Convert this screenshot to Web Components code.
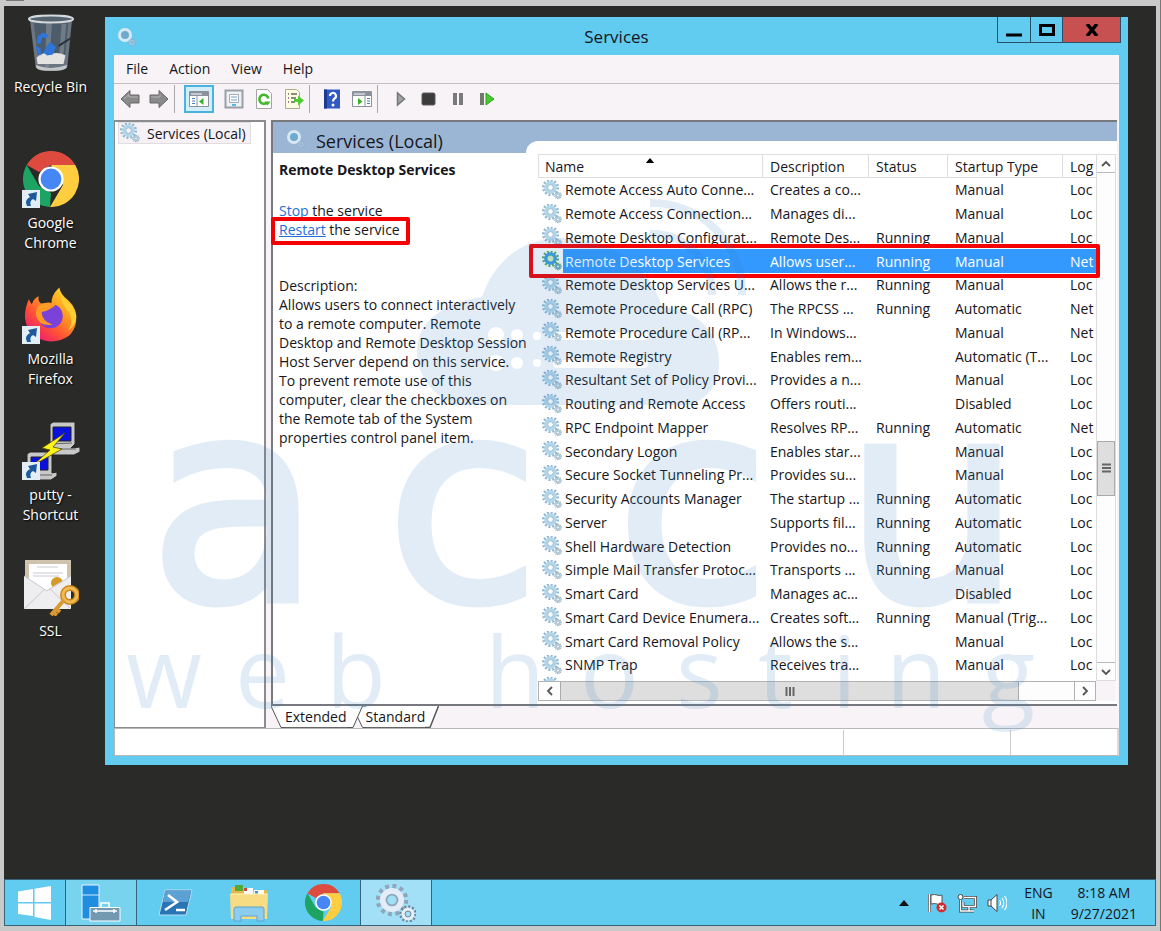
<!DOCTYPE html>
<html lang="en">
<head>
<meta charset="utf-8">
<title>Services</title>
<style>
    html, body { height: 100%; margin: 0; }
    body {
        font: 14px/19px "Open Sans", "Noto Sans", sans-serif;
        color: #16161c;
        background: #c9c9c9;
    }
</style>
</head>
<body>
<remote-screen>
    <desk-icon slot="icons" icon="bin">Recycle Bin</desk-icon>
    <desk-icon slot="icons" icon="chrome" shortcut>Google Chrome</desk-icon>
    <desk-icon slot="icons" icon="firefox" shortcut>Mozilla Firefox</desk-icon>
    <desk-icon slot="icons" icon="putty" shortcut>putty - Shortcut</desk-icon>
    <desk-icon slot="icons" icon="ssl">SSL</desk-icon>
    <app-window>
        <span slot="title">Services</span>
        <menu-bar></menu-bar>
        <tool-bar></tool-bar>
        <services-console></services-console>
        <status-bar></status-bar>
    </app-window>
    <task-bar slot="taskbar"></task-bar>
</remote-screen>

<script>
const gear = (cx, cy, r, color, light) => `
    <circle cx="${cx}" cy="${cy}" r="${r}" fill="none" stroke="${color}" stroke-width="${r * 0.5}" stroke-dasharray="${r * 0.27} ${r * 0.254}"/>
    <circle cx="${cx}" cy="${cy}" r="${r * 0.68}" fill="none" stroke="${light}" stroke-width="${r * 0.5}"/>
    <circle cx="${cx}" cy="${cy}" r="${r * 0.42}" fill="none" stroke="${color}" stroke-width="${r * 0.14}"/>`;

const ICONS = {
    gears: ['0 0 20 20', gear(8.5, 7.5, 6.8, '#8fb6cf', '#b4d6ea') + gear(16, 15.5, 3, '#86a6bb', '#b0cad9')],
    gearsOn: ['0 0 20 20', gear(8.5, 7.5, 6.8, '#58a850', '#3a9ee6') + '<circle cx="8.500" cy="7.500" r="2.800" fill="#d9efc0"/>' + gear(16, 15.5, 3, '#5c9c3c', '#58a8d8')],
    gearsPale: ['0 0 20 20', '<circle cx="9" cy="8" r="5.500" fill="#6fa9cf"/><circle cx="9" cy="8" r="5.500" fill="none" stroke="#d6e8f3" stroke-width="3"/>' + gear(16, 15.5, 3, '#8ba9c4', '#a9c6de')],
    gearsBig: ['0 0 40 38', gear(16, 16, 13, '#8fa5bb', '#e2edf8') + gear(32, 30, 7, '#6f8296', '#e6eef6')],
    back: ['0 0 20 20', '<path d="M1 10 10 1.500V6h9v8h-9v4.500z" fill="#8a8a8a" stroke="#666"/><path d="M4 10l5-4.500V8h9" stroke="#b4b4b4" fill="none"/>'],
    forward: ['0 0 20 20', '<path d="M19 10 10 1.500V6H1v8h9v4.500z" fill="#8a8a8a" stroke="#666"/><path d="M2 8h9V5.500" stroke="#b4b4b4" fill="none"/>'],
    tree: ['0 0 20 20', '<path d="M.5 2.500h19v15H.5z" fill="#fff" stroke="#8a929c"/><path d="M1 3h18v4H1z" fill="#8b929b"/><path d="M2 5h11" stroke="#fff"/><path d="M3 9.500h3M3 12h3M3 14.500h3" stroke="#4c7fc0"/><path d="M8 7v10" stroke="#8a929c"/><path d="M14.500 9v7L10 12.500z" fill="#35b324"/>'],
    props: ['0 0 20 20', '<path d="M1.500 1.500h17v17h-17z" fill="#eef2f5" stroke="#9aa0a6" stroke-width="2"/><path d="M5.500 5.500h9v8h-9z" fill="#fff" stroke="#a3adb6"/><path d="M7 8h6M7 11h6" stroke="#6d9fc4"/><path d="M8 16h4" stroke="#59b7e0" stroke-width="2"/>'],
    refresh: ['0 0 20 20', '<path d="M2.500.5h11l4 4v15h-15z" fill="#fff" stroke="#a6a6a6"/><path d="M13 13.500a4.500 4.500 0 1 1 1.300-4" fill="none" stroke="#43b82b" stroke-width="2.600"/><path d="M10.500 12.500h6l-3 4z" fill="#43b82b"/>'],
    export: ['0 0 20 20', '<path d="M1.500.5h11l3 3v16h-14z" fill="#fffbe2" stroke="#b0aa90"/><path d="M4 5h1M4 9h1M4 13h1M7 5h6M7 9h5M7 13h4" stroke="#666" stroke-width="1.400"/><path d="M10 10h4V6.500l6 5-6 5V13h-4z" fill="#51cc33"/>'],
    help: ['0 0 20 20', '<path d="M2 .5h16v19H2z" fill="#3159c4"/><path d="M2 .5h3v19H2z" fill="#1c3b8e"/><path d="M8 7a3 3 0 1 1 4.500 2.500Q11 10.500 11 12.500" stroke="#fff" stroke-width="2.200" fill="none"/><circle cx="11" cy="16" r="1.500" fill="#fff"/>'],
    pane: ['0 0 20 20', '<path d="M.5 2.500h19v15H.5z" fill="#fff" stroke="#8a929c"/><path d="M1 3h18v4H1z" fill="#8b929b"/><path d="M2 5h11" stroke="#fff"/><path d="M13 7v10" stroke="#8a929c"/><path d="M15 9.500h3M15 12h3M15 14.500h3" stroke="#4c7fc0"/><path d="M6 9v7l4.500-3.500z" fill="#35b324"/>'],
    play: ['0 0 20 20', '<path d="M7.500 4v12l7-6z" fill="#a0a4a8" stroke="#777" stroke-width="1.500"/>'],
    stop: ['0 0 20 20', '<rect x="3" y="4" width="13" height="12" rx="1.500" fill="#3c3c3c" stroke="#5c5c5c"/>'],
    pause: ['0 0 20 20', '<path d="M5 4h4v12H5zM11 4h4v12h-4z" fill="#7a7a7a"/>'],
    restart: ['0 0 20 20', '<path d="M3 4h4v12H3z" fill="#6d7a6c"/><path d="M9 4v12l8-6z" fill="#46cc30" stroke="#2f9e22"/>'],
    chrome: ['0 0 56 56', '<path d="M28 0a28 28 0 0 1 24.300 14H28L16 21 3.700 14A28 28 0 0 1 28 0z" fill="#dd4b3e"/><path d="M3.700 14 16 35l12 7-1 14A28 28 0 0 1 3.700 14z" fill="#1da362"/><path d="M28 14h24.300A28 28 0 0 1 27 56l13-22z" fill="#fecd40"/><circle cx="28" cy="28" r="12.600" fill="#fff"/><circle cx="28" cy="28" r="10.400" fill="#4686f5"/>'],
    firefox: ['0 0 56 56', '<defs><linearGradient id="ff" x1="1" y1="0" x2=".2" y2="1"><stop offset="0" stop-color="#ffee38"/><stop offset=".4" stop-color="#ffa01e"/><stop offset=".7" stop-color="#ff4f38"/><stop offset="1" stop-color="#e8147a"/></linearGradient></defs><path d="M6 12q1 3 3 5Q11 11 16 9q-1 5 2 7l11 2Q28 8 37 0q1 7 9 13 10 9 8 22-3 19-26 20Q5 53 2 31q0-11 4-19z" fill="url(#ff)"/><circle cx="28" cy="29" r="12.500" fill="#7a42d8"/><path d="M16 18q8-5 18-1-6 6-15 8 0 9 11 13-14 2-17-10 0-6 3-10z" fill="#ff9a24"/><path d="M38 3q0 14 9 22 5 10-1 19Q60 33 50 19 39 10 38 3z" fill="#ffcf33"/>'],
    putty: ['0 0 58 58', '<g stroke="#222"><path d="m28 2 3-2h22v22l-4 4 9-1v5l-6 3H31l-3-5z" fill="#c8c8c8"/><path d="M31 5h18v14H31z" fill="#0a11dd"/><path d="m28 22 22-1M30 27h24" stroke="#666"/><path d="m5 32 3-2h22v21l5-1v4l-6 4H8l-3-5z" fill="#c8c8c8"/><path d="M9 35h17v13H9z" fill="#0a11dd"/><path d="m8 53h22" stroke="#666"/></g><path d="M43 11 20 26l8 2-18 16 30-17-9-2z" fill="#fff21a" stroke="#514c00" stroke-width=".8"/>'],
    ssl: ['0 0 56 58', '<path d="M2 2h46v34H2z" fill="#cfc3ad"/><path d="M6 6h38v30H6z" fill="#fff"/><path d="M14 9h21M10 15h30M10 18h26" stroke="#c7cad6"/><circle cx="34" cy="25" r="6" fill="#d49a26"/><path d="M1 18l23 14 24-14v33H1z" fill="#eeeef0"/><path d="M1 51l21-20M48 51 27 31M1 18l23 15 24-15" fill="none" stroke="#c9c9cf"/><circle cx="47" cy="37" r="7" fill="none" stroke="#c98717" stroke-width="6"/><circle cx="47" cy="37" r="7" fill="none" stroke="#f0bb56" stroke-width="3"/><path d="M41 42 28 57M33 51l4 3M30 54l4 3" stroke="#d89a30" stroke-width="4"/>'],
    bin: ['0 0 50 60', '<path d="M3 5h44l-5 50q-2 4-17 4T9 55z" fill="#6c7680"/><path d="M7 9h36l-3 33H11z" fill="#4c5c6b"/><path d="M20 9h6l-3 46h-4zM36 10h5l-4 42h-4z" fill="#87919a" opacity=".6"/><path d="M10 45q7-6 15-4 10-2 15 2l-2 9H11z" fill="#e5e3e1"/><path d="M9 53q15 6 33 0l-1 3q-3 3-16 3T10 56z" fill="#c4c6c8"/><path d="m11 23 6-4 6 3-3 3-4-1-2 7-4-1zM9 33l5 2 1 8-4-2zM17 40l3-6 4-5 6 5-3 8-6 1z" fill="#2f74d8"/><path d="m47 24-14 9" stroke="#2c3138" stroke-width="2"/><ellipse cx="25" cy="5" rx="23" ry="3.600" fill="#55636f" stroke="#d5dade" stroke-width="2"/>'],
    windows: ['0 0 34 36', '<path d="M0 6.500 15 4v13H0zM16.500 3.700 33 1v16H16.500zM0 18.500h15V31L0 29zM16.500 18.500H33V35l-16.500-3z" fill="#fff"/>'],
    server: ['0 0 40 38', '<path d="M1 1h17v34H1z" fill="#1f8ee0" stroke="#e8f6ff"/><path d="M1 11h17" stroke="#cdeafc"/><path d="M9 23.500h30V37H9z" fill="#7398b2" stroke="#fff"/><path d="M20 23v-4h8v4M12 27h24M15 25v4M33 25v4" stroke="#fff" fill="none" stroke-width="1.500"/>'],
    shell: ['0 0 36 28', '<path d="M8 1h27l-6 25H2z" fill="#2874b4" stroke="#b9dcf1"/><path d="M8 2h26l-3 11H6z" fill="#5ba1d4"/><path d="m11 6 9 7-12 8M19 21h9" stroke="#fff" stroke-width="2.600" fill="none"/>'],
    folder: ['0 0 40 38', '<path d="M2 5q0-2 2-2h11l3 3h18q3 0 3 3v8H2z" fill="#e7b94b"/><path d="M6 1h8v6H6z" fill="#53a83c"/><path d="M15 4h9v7h-9zM25 6h10v6H25z" fill="#fff"/><path d="M15 4h3v3h-3z" fill="#d9452f"/><path d="M26 7h3v3h-3z" fill="#4a90d9"/><path d="M1 10h38l-1 25H2z" fill="#f7dc83"/><path d="M2 10h36" stroke="#fff3c2"/><path d="M5 37V25q0-2 2-2h26q2 0 2 2v12h-7v-5H12v5z" fill="#8ccdef" stroke="#5aa3cf"/>'],
    caret: ['0 0 10 6', '<path d="M0 6 5 0l5 6z" fill="#111"/>'],
    flag: ['0 0 20 20', '<path d="M2.500 1v18" stroke="#555" stroke-width="3"/><path d="M2.500 1v18" stroke="#fff" stroke-width="1.500"/><path d="M4 2q4-1 6 0t5 0v9q-3 1-5 0t-6 0z" fill="#fff" stroke="#555"/><circle cx="14.500" cy="14.500" r="5" fill="#d8282c"/><path d="m12.500 12.500 4 4m0-4-4 4" stroke="#fff" stroke-width="1.600"/>'],
    net: ['0 0 20 20', '<g fill="none"><path d="M7 4.500h11.500v9H6V9M12 14v4M7 18h10M3.500 7v11h4" stroke="#444" stroke-width="3"/><path d="M7 4.500h11.500v9H6V9M12 14v4M7 18h10M3.500 7v11h4" stroke="#fff" stroke-width="1.400"/></g><circle cx="3.500" cy="4" r="2.500" fill="#fff" stroke="#444"/>'],
    volume: ['0 0 20 20', '<path d="M1 7h3l6-5.500v17L4 13H1z" fill="#fff" stroke="#444"/><path d="M4 7v6" stroke="#444"/><path d="M12.500 7q2 3 0 6M15 5q3.500 5 0 10M17.500 3q5 7 0 14" stroke="#fff" fill="none" stroke-width="1.200"/>'],
    arrow: ['0 0 18 18', '<path d="M0 0h18v18H0z" fill="#e3edf5"/><path d="M5 16q-3-6 3-9L6 4l9-2-1 9-3-2q-4 2-2 7z" fill="#1d5a9c"/>'],
    up: ['0 0 12 12', '<path d="m2 8 4-4 4 4" fill="none" stroke="#555" stroke-width="1.800"/>'],
    down: ['0 0 12 12', '<path d="m2 4 4 4 4-4" fill="none" stroke="#555" stroke-width="1.800"/>'],
    left: ['0 0 12 12', '<path d="m8 2-4 4 4 4" fill="none" stroke="#555" stroke-width="1.800"/>'],
    right: ['0 0 12 12', '<path d="m4 2 4 4-4 4" fill="none" stroke="#555" stroke-width="1.800"/>'],
    gripV: ['0 0 12 12', '<path d="M2 2.500h9M2 6h9M2 9.500h9" stroke="#666" stroke-width="2"/>'],
    gripH: ['0 0 12 12', '<path d="M2.500 2v9M6 2v9M9.500 2v9" stroke="#666" stroke-width="2"/>']
};

function icon(name, w, h = w) {
    const [box, body] = ICONS[name];
    return `<svg width="${w}" height="${h}" viewBox="${box}" aria-hidden="true">${body}</svg>`;
}

const BASE = `
    :host, * { box-sizing: border-box; }
    svg { display: block; flex: none; }
    button { font: inherit; color: inherit; margin: 0; padding: 0; border: 0; background: none; }
`;

function define(name, html) {
    customElements.define(name, class extends HTMLElement {
        constructor() {
            super();
            this.attachShadow({ mode: 'open' });
            this.shadowRoot.innerHTML = `<style>${BASE}</style>` + (typeof html === 'function' ? html(this) : html);
        }
    });
}

define('remote-screen', `
    <style>
        :host { display: flex; flex-direction: column; min-height: 100vh; padding: 0 1px 5px 4px; border-right: 1px solid #777; }
        .edge { height: 6px; padding-left: 2px; }
        .edge i { display: block; width: 18px; height: 1px; background: #777; }
        .screen { flex: 1; display: flex; flex-direction: column; margin-right: 3px; background: #2a2b29; }
        .desktop { flex: 1; display: flex; padding: 11px 28px 114px 0; }
        .icons { width: 93px; flex: none; margin: -4px 8px 0 0; }
        .main { flex: 1; min-width: 0; display: flex; }
        ::slotted(app-window) { flex: 1; }
    </style>
    <div class="edge"><i></i></div>
    <div class="screen">
        <div class="desktop">
            <div class="icons"><slot name="icons"></slot></div>
            <div class="main"><slot></slot></div>
        </div>
        <slot name="taskbar"></slot>
    </div>
`);

define('desk-icon', el => {
    const sizes = { bin: [48, 60], chrome: [56, 56], firefox: [55, 56], putty: [58, 58], ssl: [56, 58] };
    const name = el.getAttribute('icon');
    return `
    <style>
        :host { display: block; height: 136px; color: #fff; text-align: center; line-height: 20px; text-shadow: 1px 1px 2px #000; }
        .pic { position: relative; display: flex; align-items: center; justify-content: center; height: 60px; margin-bottom: 4px; }
        .link { position: absolute; left: 18px; bottom: 1px; }
        .label { padding: 0 12px; }
        :host([icon="bin"]) .label { padding: 0; }
    </style>
    <div class="pic">${icon(name, ...sizes[name])}${el.hasAttribute('shortcut') ? `<span class="link">${icon('arrow', 18)}</span>` : ''}</div>
    <div class="label"><slot></slot></div>`;
});

define('app-window', `
    <style>
        :host { position: relative; display: flex; flex-direction: column; min-width: 0; padding: 0 9px 9px; background: #61cbf0; }
        header { display: grid; grid-template-columns: 1fr auto 1fr; height: 38px; flex: none; align-items: start; }
        header > svg { margin: 10px 0 0 2px; }
        .title { margin: 0; font-size: 17px; line-height: 40px; font-weight: 400; }
        .controls { justify-self: end; display: flex; margin-right: -2px; height: 26px; border: 1px solid #28506a; border-top: 0; }
        .controls button { display: grid; place-items: center; width: 33px; border-right: 1px solid #28506a; }
        .controls .max { width: 32px; }
        .controls .close { width: 57px; border: 0; background: #c75050; }
        .client { flex: 1; display: flex; flex-direction: column; min-height: 0; background: #f7f3f6; }
        ::slotted(services-console) { flex: 1; min-height: 0; }
        .stamp { position: absolute; inset: 0; width: 100%; height: 100%; pointer-events: none; }
    </style>
    <header>
        ${icon('gearsPale', 20)}
        <h1 class="title"><slot name="title"></slot></h1>
        <div class="controls">
            <button aria-label="Minimize"><svg width="16" height="14"><path d="M0 12h16" stroke="#000" stroke-width="3"/></svg></button>
            <button class="max" aria-label="Maximize"><svg width="16" height="12"><path d="M1.500 1.500h13v9h-13z" fill="none" stroke="#000" stroke-width="3"/></svg></button>
            <button class="close" aria-label="Close"><svg width="14" height="12"><path d="m2 0 10 12M12 0 2 12" stroke="#000" stroke-width="3.500"/></svg></button>
        </div>
    </header>
    <div class="client"><slot></slot></div>
    <svg class="stamp" viewBox="105 17 1023 748">
        <defs>
            <mask id="cut">
                <path d="M400 180h360v240H400z" fill="#fff"/>
                <g fill="#000">
                    <circle cx="496" cy="335" r="8"/><circle cx="517" cy="335" r="6"/><circle cx="537" cy="336" r="4"/>
                    <circle cx="496" cy="363" r="8"/><circle cx="517" cy="363" r="6"/><circle cx="537" cy="363" r="4"/>
                    <rect x="553" y="332" width="95" height="8" rx="4"/><rect x="553" y="360" width="95" height="8" rx="4"/>
                </g>
            </mask>
        </defs>
        <g fill="#3080c4" opacity=".14">
            <path mask="url(#cut)" d="M455 405C425 390 417 370 417 350c0-26 25-48 65-53 12-36 40-59 80-59 50 0 88 28 100 69 38 2 57 28 57 55 0 23-11 36-29 43z"/>
            <path d="M650 203a90 90 0 0 1 92 92M650 234a60 60 0 0 1 62 61" fill="none" stroke="#3080c4" stroke-width="8"/>
            <text y="600" x="149 386 616 844" font-family="DejaVu Sans" font-size="280" stroke="#3080c4" stroke-width="7">accu</text>
            <text y="708" x="126 235 326 420 485 580 676 758 832 886 982" font-family="Open Sans" font-size="98">web hosting</text>
        </g>
    </svg>
`);

define('menu-bar', `
    <style>
        :host { display: block; height: 29px; flex: none; border-bottom: 1px solid #c3c0c3; }
        nav { display: flex; gap: 21px; padding-left: 12px; line-height: 28px; }
    </style>
    <nav><button>File</button><button>Action</button><button>View</button><button>Help</button></nav>
`);

const tool = (name, label, cls = '') => `<button class="${cls}" aria-label="${label}">${icon(name, 20)}</button>`;

define('tool-bar', `
    <style>
        :host { display: flex; height: 36px; flex: none; padding: 1px 0; }
        .group { display: flex; align-items: center; gap: 10px; padding: 0 5px 0 12px; height: 28px; border-right: 1px solid #aaa; }
        .nav { gap: 9px; padding-left: 6px; }
        .view { padding-left: 9px; }
        .run { border: 0; gap: 9px; }
        .on { width: 30px; height: 28px; display: grid; place-items: center; background: #d3edf9; border: 2px solid #48b2e0; }
    </style>
    <div class="group nav">${tool('back', 'Back')}${tool('forward', 'Forward')}</div>
    <div class="group view">${tool('tree', 'Show console tree', 'on')}${tool('props', 'Properties')}${tool('refresh', 'Refresh')}${tool('export', 'Export list')}</div>
    <div class="group">${tool('help', 'Help')}${tool('pane', 'Show action pane')}</div>
    <div class="group run">${tool('play', 'Start service')}${tool('stop', 'Stop service')}${tool('pause', 'Pause service')}${tool('restart', 'Restart service')}</div>
`);

define('services-console', `
    <style>
        :host { display: flex; gap: 5px; }
        .tree { width: 152px; flex: none; padding: 0 3px; background: #fff; border: 1px solid #8b8b90; border-width: 2px 2px 1px 1px; }
        .node { display: inline-flex; align-items: center; gap: 7px; height: 22px; padding: 0 4px 0 1px; background: #f5f1f5; border: 1px solid #e0dce0; white-space: nowrap; }
        .right { flex: 1; min-width: 0; display: flex; flex-direction: column; }
        .pane { flex: 1; min-height: 0; display: grid; grid-template-columns: 253px 1fr; margin-right: 2px; background: #9bb5d5; border: 2px solid #77797e; border-right: 0; }
        .info { display: flex; flex-direction: column; min-height: 0; }
        .head { display: flex; align-items: center; gap: 11px; height: 31px; flex: none; padding: 8px 0 0 12px; font-size: 18px; }
        .head svg { margin-top: -6px; }
        .list { min-width: 0; min-height: 0; padding-top: 19px; display: flex; }
        service-list { flex: 1; min-width: 0; }
        service-detail { flex: 1; }
    </style>
    <div class="tree"><div class="node">${icon('gears', 20)}<span>Services (Local)</span></div></div>
    <div class="right">
        <div class="pane">
            <div class="info">
                <div class="head">${icon('gearsPale', 20)}<span>Services (Local)</span></div>
                <service-detail></service-detail>
            </div>
            <div class="list"><service-list></service-list></div>
        </div>
        <view-tabs></view-tabs>
    </div>
`);

define('service-detail', `
    <style>
        :host { display: block; padding: 7px 0 0 6px; background: #fff; }
        h2 { margin: 0 0 22px; font-size: 14px; line-height: 19px; }
        p { margin: 0; white-space: nowrap; }
        a { color: #1f6fd6; text-decoration: none; }
        a:hover, .boxed a { text-decoration: underline; }
        .boxed { position: relative; margin-bottom: 37px; }
        .boxed::after { content: ''; position: absolute; box-sizing: border-box; left: -8px; top: -3px; width: 139px; height: 28px; border: 4px solid #f40000; border-radius: 2px; }
    </style>
    <h2>Remote Desktop Services</h2>
    <p><a href="#stop">Stop</a> the service</p>
    <p class="boxed"><a href="#restart">Restart</a> the service</p>
    <p>Description:<br>Allows users to connect interactively<br>to a remote computer. Remote<br>Desktop and Remote Desktop Session<br>Host Server depend on this service.<br>To prevent remote use of this<br>computer, clear the checkboxes on<br>the Remote tab of the System<br>properties control panel item.</p>
`);

const services = [
    ['Remote Access Auto Conne...', 'Creates a co...', '', 'Manual', 'Loc'],
    ['Remote Access Connection...', 'Manages di...', '', 'Manual', 'Loc'],
    ['Remote Desktop Configurat...', 'Remote Des...', 'Running', 'Manual', 'Loc'],
    ['Remote Desktop Services', 'Allows user...', 'Running', 'Manual', 'Net'],
    ['Remote Desktop Services U...', 'Allows the r...', 'Running', 'Manual', 'Loc'],
    ['Remote Procedure Call (RPC)', 'The RPCSS ...', 'Running', 'Automatic', 'Net'],
    ['Remote Procedure Call (RP...', 'In Windows...', '', 'Manual', 'Net'],
    ['Remote Registry', 'Enables rem...', '', 'Automatic (T...', 'Loc'],
    ['Resultant Set of Policy Provi...', 'Provides a n...', '', 'Manual', 'Loc'],
    ['Routing and Remote Access', 'Offers routi...', '', 'Disabled', 'Loc'],
    ['RPC Endpoint Mapper', 'Resolves RP...', 'Running', 'Automatic', 'Net'],
    ['Secondary Logon', 'Enables star...', '', 'Manual', 'Loc'],
    ['Secure Socket Tunneling Pr...', 'Provides su...', '', 'Manual', 'Loc'],
    ['Security Accounts Manager', 'The startup ...', 'Running', 'Automatic', 'Loc'],
    ['Server', 'Supports fil...', 'Running', 'Automatic', 'Loc'],
    ['Shell Hardware Detection', 'Provides no...', 'Running', 'Automatic', 'Loc'],
    ['Simple Mail Transfer Protoc...', 'Transports ...', 'Running', 'Manual', 'Loc'],
    ['Smart Card', 'Manages ac...', '', 'Disabled', 'Loc'],
    ['Smart Card Device Enumera...', 'Creates soft...', 'Running', 'Manual (Trig...', 'Loc'],
    ['Smart Card Removal Policy', 'Allows the s...', '', 'Manual', 'Loc'],
    ['SNMP Trap', 'Receives tra...', '', 'Manual', 'Loc'],
    ['', '', '', '', '']
];

define('service-list', `
    <style>
        :host { position: relative; display: grid; grid-template: minmax(0, 1fr) 20px 3px / minmax(0, 1fr) 20px; padding: 13px 1px 0 12px; background: #fff; border-top-left-radius: 12px; }
        .view { overflow: hidden; }
        /* one row hangs below the visible part */
        table { width: 100%; height: 103%; table-layout: fixed; border-collapse: separate; border-spacing: 0; }
        th, td { padding: 0 0 0 7px; text-align: left; font-weight: 400; white-space: nowrap; overflow: hidden; line-height: 19px; }
        th { height: 24px; border: 1px solid #dedede; border-left: 0; }
        th:first-child { border-left: 1px solid #dedede; padding-left: 6px; }
        th:last-child { border-right: 0; }
        .name { position: relative; }
        .sort { position: absolute; left: 106px; top: 3px; width: 10px; height: 5px; }
        td:first-child { padding-left: 4px; }
        .cell { display: flex; align-items: center; gap: 3px; }
        .cell svg { margin: -2px 0; }
        .sel td { color: #fff; background: #3399ff; }
        .sel td:first-child { background: linear-gradient(90deg, #fff 25px, #3399ff 25px); }
        .vbar, .hbar { display: flex; background: #fdfdfd; border: 1px solid #ddd; }
        .vbar { flex-direction: column; }
        .vbar button, .hbar button { display: grid; place-items: center; flex: none; width: 18px; height: 18px; }
        .vbar button { width: 100%; border-bottom: 1px solid #bbb; }
        .vbar button:last-child { border: 0; border-top: 1px solid #bbb; }
        .hbar { border: 1px solid #b2b2b2; }
        .hbar button { width: 21px; }
        .hbar button:last-child { border-left: 1px solid #b2b2b2; }
        .thumb { display: grid; place-items: center; background: #dedede; border: 1px solid #aaa; }
        .vbar .thumb { height: 55px; }
        .hbar .thumb { flex: 458; border-width: 0 1px; }
        .before { flex: 266; }
        .after { flex: 165; }
        .hbar .after { flex: 55; }
        .corner { background: #f7f3f6; }
        .mark { position: absolute; left: 3px; right: 17px; top: 103px; height: 34px; border: 4px solid #f40000; border-radius: 2px; pointer-events: none; }
    </style>
    <div class="view">
        <table>
            <colgroup><col style="width:225px"><col style="width:106px"><col style="width:79px"><col style="width:115px"><col></colgroup>
            <thead><tr><th class="name">Name<svg class="sort" viewBox="0 0 10 6"><path d="M0 6 5 0l5 6z"/></svg></th><th>Description</th><th>Status</th><th>Startup Type</th><th>Log</th></tr></thead>
            <tbody>
                ${services.map((row, i) => `<tr class="${i === 3 ? 'sel' : ''}"><td><div class="cell">${icon(i === 3 ? 'gearsOn' : 'gears', 20)}<span>${row[0]}</span></div></td>${row.slice(1).map(text => `<td>${text}</td>`).join('')}</tr>`).join('')}
            </tbody>
        </table>
    </div>
    <div class="vbar">
        <button aria-label="Scroll up">${icon('up', 12)}</button>
        <div class="before"></div>
        <div class="thumb">${icon('gripV', 12)}</div>
        <div class="after"></div>
        <button aria-label="Scroll down">${icon('down', 12)}</button>
    </div>
    <div class="hbar">
        <button aria-label="Scroll left">${icon('left', 12)}</button>
        <div class="thumb">${icon('gripH', 12)}</div>
        <div class="after"></div>
        <button aria-label="Scroll right">${icon('right', 12)}</button>
    </div>
    <div class="corner"></div>
    <div class="mark"></div>
`);

define('view-tabs', `
    <style>
        :host { display: flex; height: 22px; flex: none; line-height: 20px; }
        button { background: #fff; border-bottom: 1px solid #666; }
    </style>
    <svg width="14" height="22"><path d="M0 0h14v22h-4z" fill="#fff"/><path d="m0 0 10 21.500h4" fill="none" stroke="#555"/></svg>
    <button>Extended</button>
    <svg width="19" height="22"><path d="M0 0h20v22H0z" fill="#fff"/><path d="m6 22 4-10 5 10z" fill="#f7f3f6"/><path d="M0 21.500h6L15.500 0H20M10.500 11l5 10.500H20" fill="none" stroke="#555"/></svg>
    <button>Standard</button>
    <svg width="14" height="22"><path d="M0 0h13L5 22H0z" fill="#fff"/><path d="M0 21.500h5L13.500 0" fill="none" stroke="#555" stroke-width="1.500"/></svg>
`);

define('status-bar', `
    <style>
        :host { display: flex; height: 28px; flex: none; background: #fff; border: 1px solid #b9b9b9; border-right: 2px solid #ded8de; }
        i { border-left: 1px solid #ccc; margin-top: 1px; }
        .text { flex: 1; border: 0; }
        .a { width: 167px; }
        .b { width: 107px; }
    </style>
    <i class="text"></i><i class="a"></i><i class="b"></i>
`);

define('task-bar', `
    <style>
        :host { display: flex; height: 47px; flex: none; background: #61cbf0; border: 1px solid #35647a; }
        .apps { display: flex; flex: 1; }
        button { display: grid; place-items: center; width: 74px; }
        .start { width: 60px; }
        .open { width: 72px; background: #78d3ef; border: 1px solid #35647a; border-width: 0 1px; }
        .shell { width: 75px; }
        .active { background: #a2e0f7; }
        .tray { display: flex; align-items: center; gap: 10px; line-height: 21px; text-align: center; }
        .tray button { width: 26px; }
        .lang { margin-left: 7px; }
        .clock { margin: 0 18px 0 8px; }
    </style>
    <div class="apps">
        <button class="start" aria-label="Start">${icon('windows', 34, 36)}</button>
        <button class="open" aria-label="Server Manager">${icon('server', 40, 38)}</button>
        <button class="shell" aria-label="PowerShell">${icon('shell', 36, 28)}</button>
        <button aria-label="File Explorer">${icon('folder', 40, 38)}</button>
        <button aria-label="Google Chrome">${icon('chrome', 37)}</button>
        <button class="open active" aria-label="Services">${icon('gearsBig', 40, 38)}</button>
    </div>
    <div class="tray">
        <button aria-label="Show hidden icons">${icon('caret', 10, 6)}</button>
        ${icon('flag', 20)}${icon('net', 20)}${icon('volume', 20)}
        <div class="lang">ENG<br>IN</div>
        <div class="clock">8:18 AM<br>9/27/2021</div>
    </div>
`);
</script>
</body>
</html>
